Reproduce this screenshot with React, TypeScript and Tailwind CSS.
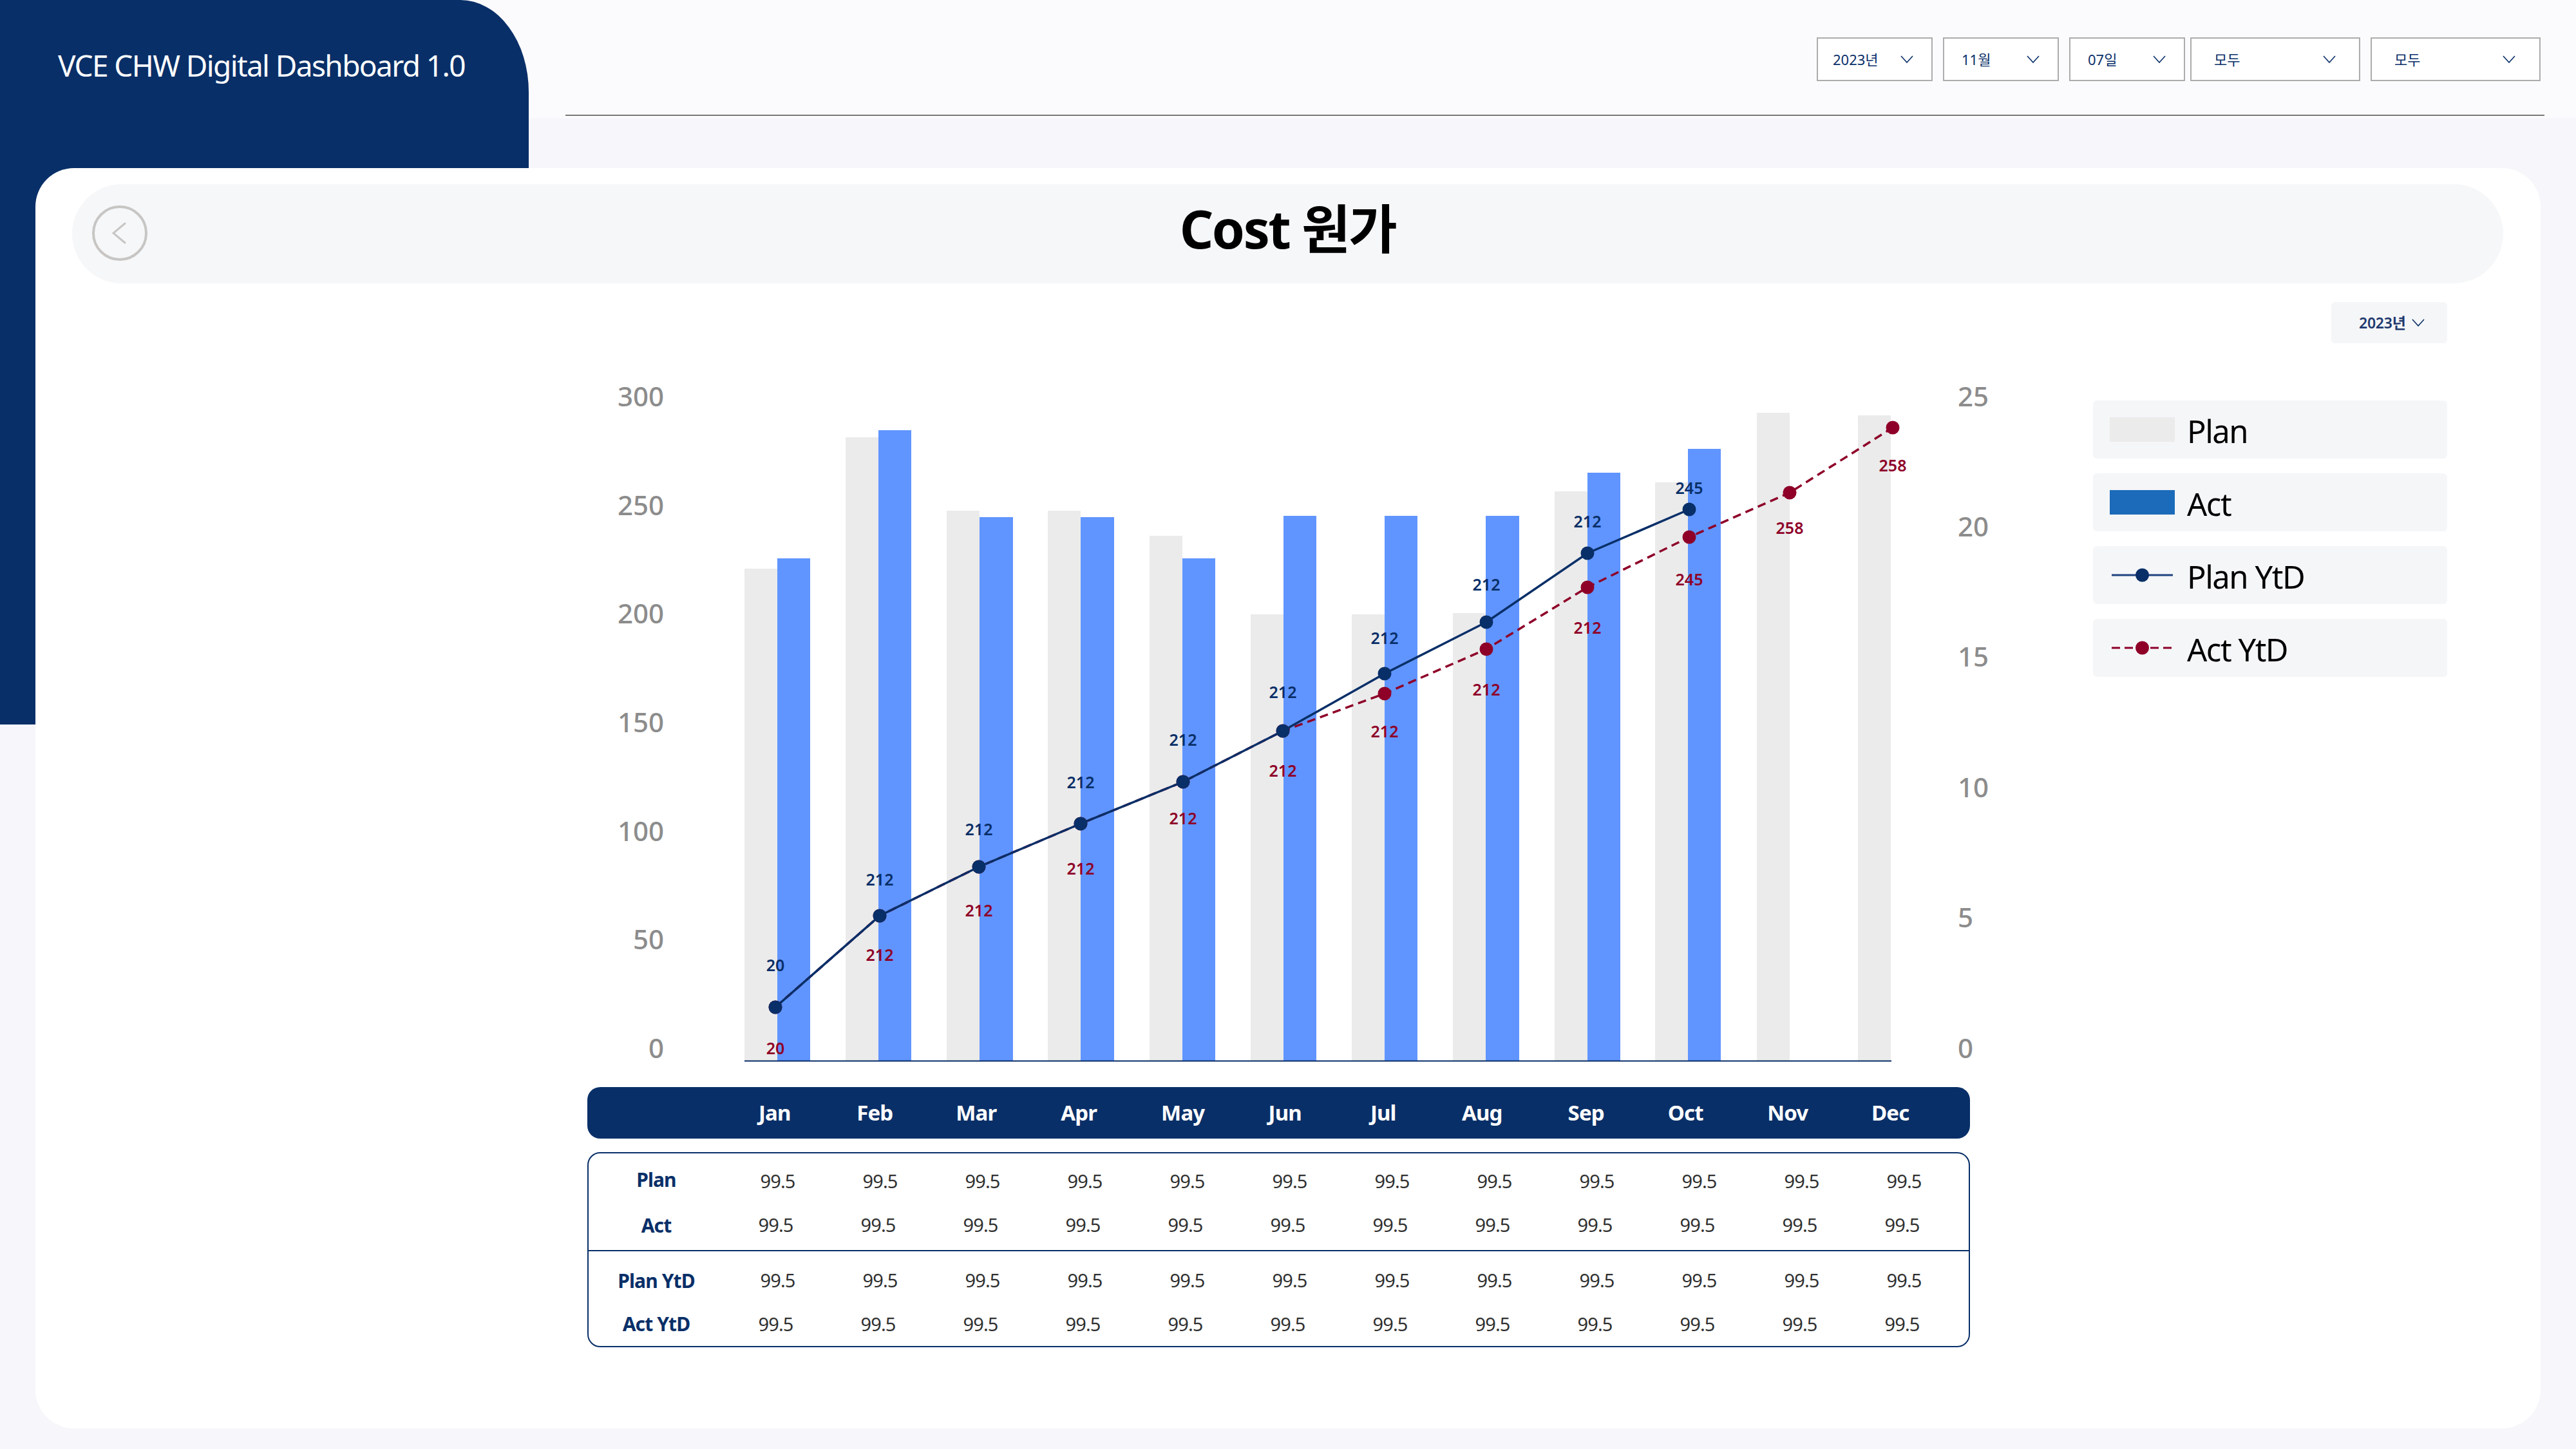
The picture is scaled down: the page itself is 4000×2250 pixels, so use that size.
const NAVY = "#092f68";
const MAROON = "#8e0028";

const months = [
  { name: "Jan", nudge: "" },
  { name: "Feb", nudge: "-translate-x-[2px]" },
  { name: "Mar", nudge: "-translate-x-[2px]" },
  { name: "Apr", nudge: "" },
  { name: "May", nudge: "translate-x-[4px]" },
  { name: "Jun", nudge: "translate-x-[5px]" },
  { name: "Jul", nudge: "" },
  { name: "Aug", nudge: "-translate-x-[4px]" },
  { name: "Sep", nudge: "" },
  { name: "Oct", nudge: "-translate-x-[3px]" },
  { name: "Nov", nudge: "-translate-x-[2px]" },
  { name: "Dec", nudge: "" },
];

const filters = [
  { label: "2023년", box: "w-[180px] pl-[23px] pr-[28px]", gap: "" },
  { label: "11월", box: "w-[180px] pl-[27px] pr-[28px]", gap: "" },
  { label: "07일", box: "w-[180px] pl-[27px] pr-[28px]", gap: "" },
  { label: "모두", box: "w-[264px] pl-[35px] pr-[36px]", gap: "-ml-2" },
  { label: "모두", box: "w-[264px] pl-[35px] pr-[37px]", gap: "" },
];

// page coordinates, the svg viewBox below is offset to match
const barX = [1156, 1313, 1470, 1627, 1785, 1942, 2099, 2256, 2414, 2570, 2728, 2885];
const planTops = [883, 679, 793, 793, 832, 954, 954, 952, 763, 749, 641, 645];
const actTops = [867, 668, 803, 803, 867, 801, 801, 801, 734, 697];
const actW = [51, 51, 52, 52, 51, 51, 51, 52, 51, 51];
const pointX = [1204, 1366, 1520, 1678, 1837, 1992, 2150, 2308, 2465, 2623, 2779, 2939];
const planY = [1564, 1422, 1346, 1279, 1214, 1135, 1046, 966, 859, 791];
const actY = [1564, 1422, 1346, 1279, 1214, 1135, 1077, 1008, 912, 834, 765, 664];
const planLabels = [
  { t: "20", y: 1498 },
  { t: "212", y: 1365 },
  { t: "212", y: 1287 },
  { t: "212", y: 1214 },
  { t: "212", y: 1148 },
  { t: "212", y: 1074 },
  { t: "212", y: 990 },
  { t: "212", y: 907 },
  { t: "212", y: 809 },
  { t: "245", y: 757 },
];
const actLabels = [
  { t: "20", y: 1627 },
  { t: "212", y: 1482 },
  { t: "212", y: 1413 },
  { t: "212", y: 1348 },
  { t: "212", y: 1270 },
  { t: "212", y: 1196 },
  { t: "212", y: 1135 },
  { t: "212", y: 1070 },
  { t: "212", y: 974 },
  { t: "245", y: 899 },
  { t: "258", y: 819 },
  { t: "258", y: 722 },
];
const leftAxis = [
  { t: "300", y: 614 },
  { t: "250", y: 783 },
  { t: "200", y: 951 },
  { t: "150", y: 1120 },
  { t: "100", y: 1289 },
  { t: "50", y: 1457 },
  { t: "0", y: 1626 },
];
const rightAxis = [
  { t: "25", y: 614 },
  { t: "20", y: 816 },
  { t: "15", y: 1018 },
  { t: "10", y: 1221 },
  { t: "5", y: 1423 },
  { t: "0", y: 1626 },
];

function Chevron({ className }: { className: string }) {
  return (
    <svg viewBox="0 0 20 12" fill="none" className={className}>
      <path d="M1 1l9 10 9-10" stroke={NAVY} strokeWidth="1.6" />
    </svg>
  );
}

function Chart() {
  const line = (ys: number[]) => ys.map((y, i) => `${pointX[i]},${y}`).join(" ");
  return (
    <svg viewBox="912 560 2288 1128" className="block h-[1128px] w-[2288px]">
      {barX.map((x, i) => (
        <rect key={x} x={x} y={planTops[i]} width={51} height={1647 - planTops[i]} fill="#ebebeb" />
      ))}
      {actTops.map((top, i) => (
        <rect key={i} x={barX[i] + 51} y={top} width={actW[i]} height={1647 - top} fill="#6095ff" />
      ))}
      <line x1={1156} y1={1647.5} x2={2937} y2={1647.5} stroke={NAVY} strokeWidth="2" />
      <polyline points={line(actY)} fill="none" stroke={MAROON} strokeWidth="3.5" strokeDasharray="13 8" />
      {actY.map((y, i) => (
        <circle key={i} cx={pointX[i]} cy={y} r={10.5} fill={MAROON} />
      ))}
      <polyline points={line(planY)} fill="none" stroke={NAVY} strokeWidth="3.5" />
      {planY.map((y, i) => (
        <circle key={i} cx={pointX[i]} cy={y} r={10.5} fill={NAVY} />
      ))}
      <g fontSize="25" fontWeight="600" textAnchor="middle" dominantBaseline="central">
        {actLabels.map((l, i) => (
          <text key={i} x={pointX[i]} y={l.y} fill={MAROON}>
            {l.t}
          </text>
        ))}
        {planLabels.map((l, i) => (
          <text key={i} x={pointX[i]} y={l.y} fill={NAVY}>
            {l.t}
          </text>
        ))}
      </g>
      <g fontSize="42" fontWeight="500" fill="#8c8c8c" dominantBaseline="central">
        {leftAxis.map((l) => (
          <text key={l.t} x={1031} y={l.y} textAnchor="end">
            {l.t}
          </text>
        ))}
        {rightAxis.map((l) => (
          <text key={l.t} x={3040} y={l.y}>
            {l.t}
          </text>
        ))}
      </g>
    </svg>
  );
}

function DataRow({ label, nudge, labelShift = "" }: { label: string; nudge: boolean; labelShift?: string }) {
  return (
    <div className="grid h-[68px] grid-cols-[214px_repeat(12,159px)] items-center">
      <div className={`pr-[4px] text-center text-[30px] font-bold tracking-[-0.03em] text-[#092f68] ${labelShift}`}>
        {label}
      </div>
      {months.map((m) => (
        <div
          key={m.name}
          className={
            nudge
              ? "pr-[6px] text-center text-[29px] tracking-[-0.03em] text-[#303030]"
              : "text-center text-[29px] tracking-[-0.03em] text-[#303030]"
          }
        >
          99.5
        </div>
      ))}
    </div>
  );
}

function LegendItem({ label, children }: { label: string; children: React.ReactNode }) {
  return (
    <div className="flex h-[90px] items-center gap-[19px] rounded-[6px] bg-[#f5f6f8] pl-[26px]">
      <div className="h-[38px] w-[101px]">{children}</div>
      <span className="pt-[5px] text-[49px] leading-none tracking-[-0.03em] text-black">{label}</span>
    </div>
  );
}

export default function App() {
  return (
    <div className="relative h-[2250px] w-[4000px] overflow-hidden bg-[#f6f6fb] font-['Noto_Sans','Noto_Sans_CJK_KR',sans-serif]">
      <div className="absolute left-0 top-0 h-[1125px] w-[821px] rounded-tr-[106px_143px] bg-[#092f68]" />

      <header className="relative flex h-[184px] bg-[#fbfbfd]">
        <div className="w-[821px] rounded-tr-[106px_143px] bg-[#092f68] pl-[90px] pt-[69px] text-[46px] leading-[64px] tracking-[-0.035em] text-white">
          VCE CHW Digital Dashboard 1.0
        </div>
        <div className="ml-[57px] flex h-[180px] w-[3073px] justify-end gap-4 border-b-2 border-[#7a7a7a] pr-[6px] pt-[58px]">
          {filters.map((f, i) => (
            <div
              key={i}
              className={`flex h-[68px] items-center justify-between border-2 border-[#acacac] bg-white text-[22px] text-[#092f68] ${f.box} ${f.gap}`}
            >
              <span>{f.label}</span>
              <Chevron className="h-[12px] w-[20px]" />
            </div>
          ))}
        </div>
      </header>

      <main className="relative ml-[55px] mt-[77px] h-[1957px] w-[3890px] rounded-[60px] bg-white pt-[25px]">
        <div className="relative ml-[57px] flex h-[154px] w-[3775px] items-center justify-center rounded-full bg-[#f6f7f9]">
          <div className="absolute left-[31px] top-[33px] flex h-[86px] w-[86px] items-center justify-center rounded-full border-4 border-[#c8c6c4]">
            <svg viewBox="0 0 22 34" fill="none" className="mr-[2px] h-[34px] w-[22px]">
              <path d="M20 2L2 17l18 15" stroke="#c8c6c4" strokeWidth="3" strokeLinecap="round" />
            </svg>
          </div>
          <h1 className="pb-[18px] text-[82px] font-bold leading-none tracking-[-0.03em] text-black">Cost 원가</h1>
        </div>

        <div className="ml-[3565px] mt-[29px] flex h-[64px] w-[180px] items-center gap-[9px] rounded-[6px] bg-[#f5f6f8] pl-[43px] text-[23px] font-semibold tracking-[-0.01em] text-[#1f3a6e]">
          <span>2023년</span>
          <Chevron className="h-[12px] w-[20px]" />
        </div>

        <div className="ml-[857px] mt-[27px] flex gap-[50px]">
          <div className="w-[2288px]">
            <Chart />
            <div className="grid h-[80px] w-[2147px] grid-cols-[212px_repeat(12,157.5px)] items-center rounded-[20px] bg-[#092f68] text-[33px] font-bold tracking-[-0.025em] text-white">
              <div />
              {months.map((m) => (
                <div key={m.name} className={`text-center ${m.nudge}`}>
                  {m.name}
                </div>
              ))}
            </div>
            <div className="mt-[21px] h-[303px] w-[2147px] rounded-[20px] border-2 border-[#092f68] pt-[9px]">
              <DataRow label="Plan" nudge={false} labelShift="-translate-y-[3px]" />
              <DataRow label="Act" nudge={true} />
              <div className="mt-[5px] border-t-2 border-[#092f68] pt-[11px]">
                <DataRow label="Plan YtD" nudge={false} />
                <DataRow label="Act YtD" nudge={true} labelShift="-translate-y-[1px]" />
              </div>
            </div>
          </div>

          <div className="mt-[62px] flex h-fit w-[550px] flex-col gap-[23px]">
            <LegendItem label="Plan">
              <div className="h-full bg-[#ebebeb]" />
            </LegendItem>
            <LegendItem label="Act">
              <div className="h-full bg-[#1c6bba]" />
            </LegendItem>
            <LegendItem label="Plan YtD">
              <svg viewBox="0 0 101 38" className="h-full w-full">
                <line x1="3" y1="19" x2="98" y2="19" stroke="#1f4480" strokeWidth="3" />
                <circle cx="50.5" cy="19" r="10.5" fill={NAVY} />
              </svg>
            </LegendItem>
            <LegendItem label="Act YtD">
              <svg viewBox="0 0 101 38" className="h-full w-full">
                <line x1="3" y1="19" x2="96" y2="19" stroke={MAROON} strokeWidth="3" strokeDasharray="13 7" />
                <circle cx="50.5" cy="19" r="10.5" fill={MAROON} />
              </svg>
            </LegendItem>
          </div>
        </div>
      </main>
    </div>
  );
}
